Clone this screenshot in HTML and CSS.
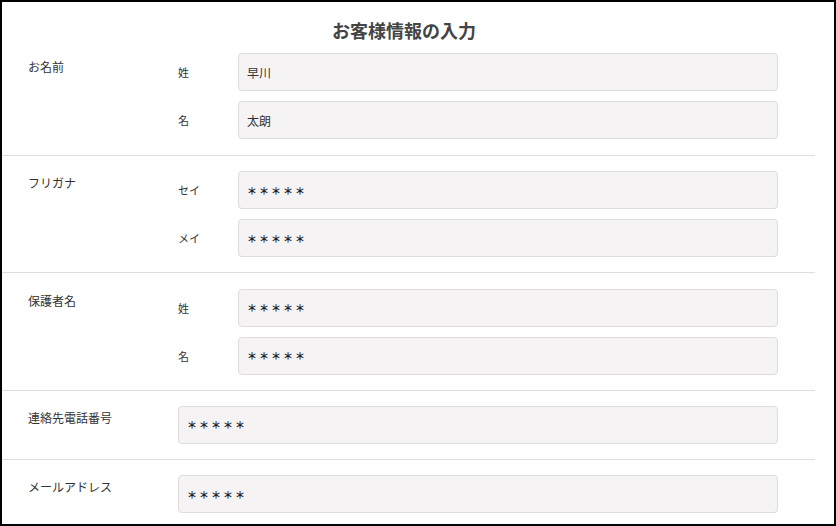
FILE: index.html
```html
<!DOCTYPE html>
<html lang="ja">
<head>
    <meta charset="UTF-8">
    <meta name="viewport" content="width=device-width, initial-scale=1.0">
    <title>お客様情報の入力</title>
    <link rel="stylesheet" href="styles.css">
</head>
<body>
    <div class="page">
        <h1>お客様情報の入力</h1>
        <form>
            <div class="row first">
                <div class="label">お名前</div>
                <div class="fields">
                    <div class="field">
                        <span class="sub">姓</span>
                        <input type="text" value="早川">
                    </div>
                    <div class="field">
                        <span class="sub">名</span>
                        <input type="text" value="太朗">
                    </div>
                </div>
            </div>
            <div class="row">
                <div class="label">フリガナ</div>
                <div class="fields">
                    <div class="field">
                        <span class="sub">セイ</span>
                        <input type="text" class="masked" value="＊＊＊＊＊">
                    </div>
                    <div class="field">
                        <span class="sub">メイ</span>
                        <input type="text" class="masked" value="＊＊＊＊＊">
                    </div>
                </div>
            </div>
            <div class="row">
                <div class="label">保護者名</div>
                <div class="fields">
                    <div class="field">
                        <span class="sub">姓</span>
                        <input type="text" class="masked" value="＊＊＊＊＊">
                    </div>
                    <div class="field">
                        <span class="sub">名</span>
                        <input type="text" class="masked" value="＊＊＊＊＊">
                    </div>
                </div>
            </div>
            <div class="row">
                <div class="label">連絡先電話番号</div>
                <div class="fields">
                    <div class="field">
                        <input type="tel" class="masked" value="＊＊＊＊＊">
                    </div>
                </div>
            </div>
            <div class="row">
                <div class="label">メールアドレス</div>
                <div class="fields">
                    <div class="field">
                        <input type="email" class="masked" value="＊＊＊＊＊">
                    </div>
                </div>
            </div>
        </form>
    </div>
</body>
</html>
```

FILE: styles.css
```css
body {
    margin: 0;
    padding: 0;
    background-color: #fff;
    color: #333;
    font-family: "Noto Sans CJK JP", "Noto Sans", sans-serif;
}
.page {
    box-sizing: border-box;
    width: 836px;
    height: 526px;
    border: 2px solid #000;
    overflow: hidden;
}
h1 {
    margin: 15px 0 0;
    padding-right: 28px;
    font-size: 18px;
    line-height: 26px;
    text-align: center;
    color: #444;
}
.row {
    display: flex;
    margin-right: 19px;
    padding: 15.2px 0;
    border-bottom: 1px solid #ddd;
}
.row.first {
    padding-top: 10px;
    padding-bottom: 16px;
}
.label {
    width: 150px;
    padding-left: 26px;
    padding-top: 3px;
    font-size: 12px;
    line-height: 18px;
}
.first .label {
    padding-top: 5px;
}
.fields {
    display: flex;
    flex-direction: column;
    gap: 10px;
}
.field {
    display: flex;
    align-items: center;
}
.sub {
    width: 60px;
    font-size: 11px;
}
input {
    box-sizing: border-box;
    width: 540px;
    height: 38px;
    padding: 0 8px;
    font-family: "Noto Sans CJK JP", sans-serif;
    font-size: 12px;
    color: #333;
    background-color: #f5f3f3;
    border: 1px solid #ddd;
    border-radius: 4px;
}
input.masked {
    padding-left: 8px;
    font-size: 10px;
    font-weight: bold;
    letter-spacing: 2px;
    color: #222;
}
.field input:only-child {
    width: 600px;
}
```
